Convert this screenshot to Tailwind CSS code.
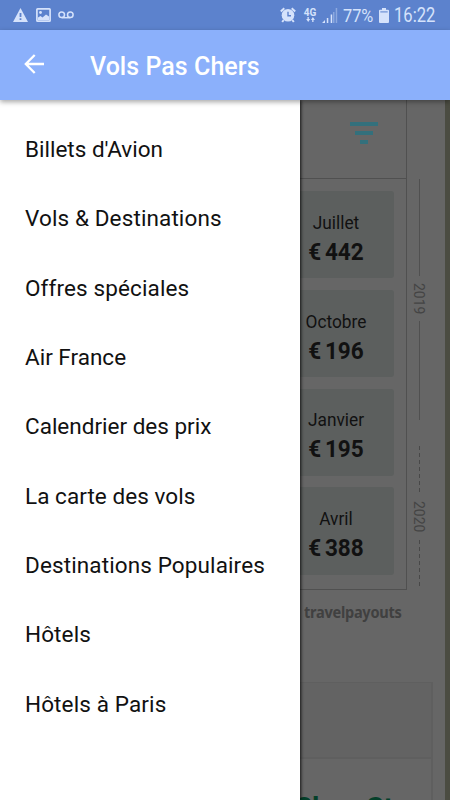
<!DOCTYPE html>
<html lang="fr">
<head>
<meta charset="utf-8">
<title>Vols Pas Chers</title>
<script src="https://cdn.jsdelivr.net/npm/@tailwindcss/browser@4"></script>
</head>
<body class="w-[450px] h-[800px] overflow-hidden font-['Roboto',sans-serif] bg-[#666]">
<div class="flex flex-col h-[800px]">
  <div class="flex items-center h-[30px] shrink-0 bg-[#5c82cd] pl-[13px] pr-[14px] text-[#d5e2fb]">
    <svg class="w-[15px] h-[14px]" viewBox="0 0 15 14"><path fill="#d5e2fb" d="M7.5 0 15 14H0z"/><path fill="#5c82cd" d="M6.600 5h1.800v4H6.600zM6.600 10.300h1.800v1.800H6.600z"/></svg>
    <svg class="w-[15px] h-[14px] ml-[8px]" viewBox="0 0 15 14"><rect x=".9" y=".9" width="13.200" height="12.200" rx=".7" fill="none" stroke="#d5e2fb" stroke-width="1.700"/><circle cx="4.500" cy="4.500" r="1.400" fill="#d5e2fb"/><path fill="#d5e2fb" d="M2 12V9.500L4.500 8l2 1.500L10 6.500l3 2V12z"/></svg>
    <svg class="w-[16px] h-[8px] ml-[7px]" viewBox="0 0 16 8"><g fill="none" stroke="#d5e2fb" stroke-width="1.500"><circle cx="3.700" cy="3.800" r="2.800"/><circle cx="12.300" cy="3.800" r="2.800"/><path d="M3.700 6.700h8.600"/></g></svg>
    <svg class="w-[16px] h-[16px] ml-auto" viewBox="0 0 16 16"><circle cx="8" cy="8.300" r="6.300" fill="#d5e2fb"/><path d="M.8 4.500 4.300 1.200M15.200 4.500 11.700 1.200M3.700 13l-1.500 2M12.300 13l1.500 2" stroke="#d5e2fb" stroke-width="2"/><path d="M8 4.700V8.800h3" fill="none" stroke="#5c82cd" stroke-width="1.400"/></svg>
    <div class="flex flex-col items-center w-[12px] ml-[8px]">
      <span class="text-[10px] leading-[9px] font-bold">4G</span>
      <svg class="w-[9px] h-[5px]" viewBox="0 0 9 5"><path fill="#d5e2fb" d="M1.500 0h1.300v2H4.200L2.200 5 .2 2h1.300zM6.200 5h1.300V3h1.400L6.900 0l-2 3h1.300z"/></svg>
    </div>
    <svg class="w-[16px] h-[15px] ml-[6px]" viewBox="0 0 16 15"><path fill="#d5e2fb" d="M0 15l3-3v3zM4.800 10h1.500v5H4.800zM8.700 6.500h1.500V15H8.700z"/><path fill="#d5e2fb" opacity=".4" d="M13.700 0h1.500v15h-1.500zM11 4h1.500v11H11z"/></svg>
    <span class="text-[19px] leading-[20px] ml-[5px] mt-[1px] w-[32px] whitespace-nowrap origin-left scale-x-[0.860]">77%</span>
    <svg class="w-[10px] h-[15px] ml-[4px]" viewBox="0 0 10 15"><path fill="#d5e2fb" d="M3 0h4v1.700h2q1 0 1 1V14q0 1-1 1H1q-1 0-1-1V2.700q0-1 1-1h2z"/><path fill="#5c82cd" opacity=".6" d="M1.300 3h7.400v1.700H1.300z"/></svg>
    <span class="text-[19.500px] leading-[20px] ml-[5px] mt-[1px] w-[42px] whitespace-nowrap origin-left scale-x-[0.850]">16:22</span>
  </div>
  <header class="relative z-10 flex items-center h-[70px] shrink-0 bg-[#8bb0fb] pl-[24px] shadow-[0_2px_5px_rgba(0,0,0,0.35)]">
    <svg class="w-[21px] h-[20px] -mt-[2px]" viewBox="0 0 21 20" fill="none" stroke="#fff" stroke-width="2.300"><path d="M20 10H2M10.700 1 1.800 10l8.900 9"/></svg>
    <h1 class="ml-[45px] mt-[4px] text-[25px] leading-[30px] font-medium text-white whitespace-nowrap tracking-[0.050px]">Vols Pas Chers</h1>
  </header>
  <main class="flex flex-1 min-h-0">
    <nav class="relative z-[5] flex flex-col w-[300px] shrink-0 bg-white pt-[15px] pl-[25px] text-[22.500px] text-[#111] tracking-[0.120px] shadow-[1px_0_3px_rgba(0,0,0,0.800)] whitespace-nowrap">
      <a class="flex items-center h-[69.380px] tracking-[0px]">Billets d'Avion</a>
      <a class="flex items-center h-[69.380px]">Vols &amp; Destinations</a>
      <a class="flex items-center h-[69.380px]">Offres spéciales</a>
      <a class="flex items-center h-[69.380px] tracking-[0px]">Air France</a>
      <a class="flex items-center h-[69.380px] tracking-[0px]">Calendrier des prix</a>
      <a class="flex items-center h-[69.380px] tracking-[0.050px]">La carte des vols</a>
      <a class="flex items-center h-[69.380px]">Destinations Populaires</a>
      <a class="flex items-center h-[69.380px]">Hôtels</a>
      <a class="flex items-center h-[69.380px]">Hôtels à Paris</a>
    </nav>
    <div class="flex flex-col w-[145px] shrink-0 overflow-hidden bg-[#666]">
      <div class="flex h-[490px] shrink-0">
        <section class="flex flex-col w-[107px] border-r border-b border-[#505050]">
          <div class="flex flex-col items-center gap-[5px] h-[79px] shrink-0 pt-[22px] pl-[21px] border-b border-[#505050]">
            <div class="w-[28px] h-[4px] bg-[#33707c]"></div>
            <div class="w-[18px] h-[4px] bg-[#33707c]"></div>
            <div class="w-[8px] h-[4px] bg-[#33707c]"></div>
          </div>
          <div class="flex flex-col gap-[11.600px] pt-[12px] w-[94px] text-center text-[#111] whitespace-nowrap">
            <div class="h-[87.200px] rounded-r-[3px] bg-[#5c5f5e] pt-[21px] pr-[22px]"><p class="text-[18px] leading-[22px] scale-x-[0.960]">Juillet</p><p class="mt-[6px] text-[23px] leading-[26px] font-bold [word-spacing:-2px] scale-x-[0.980]">€ 442</p></div>
            <div class="h-[87.200px] rounded-r-[3px] bg-[#5c5f5e] pt-[21px] pr-[22px]"><p class="text-[18px] leading-[22px] scale-x-[0.960]">Octobre</p><p class="mt-[6px] text-[23px] leading-[26px] font-bold [word-spacing:-2px] scale-x-[0.980]">€ 196</p></div>
            <div class="h-[87.200px] rounded-r-[3px] bg-[#5c5f5e] pt-[20.500px] pr-[22px]"><p class="text-[18px] leading-[22px] scale-x-[0.960]">Janvier</p><p class="mt-[6px] text-[23px] leading-[26px] font-bold [word-spacing:-2px] scale-x-[0.980]">€ 195</p></div>
            <div class="h-[87.200px] rounded-r-[3px] bg-[#5c5f5e] pt-[21px] pr-[22px]"><p class="text-[18px] leading-[22px] scale-x-[0.960]">Avril</p><p class="mt-[6px] text-[23px] leading-[26px] font-bold [word-spacing:-2px] scale-x-[0.980]">€ 388</p></div>
          </div>
        </section>
        <aside class="flex flex-col items-center w-[24px] pt-[79px] text-[14px] leading-[14px] text-[#444]">
          <div class="w-px h-[97px] bg-[#505050]"></div>
          <span class="h-[45px] flex items-center [writing-mode:vertical-rl] justify-center">2019</span>
          <div class="w-px h-[99px] bg-[#505050]"></div>
          <div class="mt-[26px] w-px h-[48px] bg-[repeating-linear-gradient(#484848_0_4px,transparent_4px_7px)]"></div>
          <span class="h-[46px] flex items-center [writing-mode:vertical-rl] justify-center">2020</span>
          <div class="w-px h-[48px] bg-[repeating-linear-gradient(#484848_0_4px,transparent_4px_7px)]"></div>
        </aside>
      </div>
      <p class="mt-[11px] ml-[4px] h-[24px] text-[16px] leading-[22px] font-bold font-['Noto_Sans','Open_Sans',sans-serif] text-[#404040] tracking-[-0.300px] origin-left scale-x-[0.910]">travelpayouts</p>
      <section class="mt-[59px] w-[133px] flex-1 border-t border-r-2 border-[#5f5f5f] bg-[#666]">
        <div class="h-[76px] bg-[#636363] border-b-2 border-[#5f5f5f]"></div>
        <p class="mt-[33px] -ml-[5px] text-[28px] leading-[32px] font-bold text-[#05402a] whitespace-nowrap">Shop St</p>
      </section>
    </div>
    <div class="w-[5px] bg-[#4b4c42]"></div>
  </main>
</div>
</body>
</html>
